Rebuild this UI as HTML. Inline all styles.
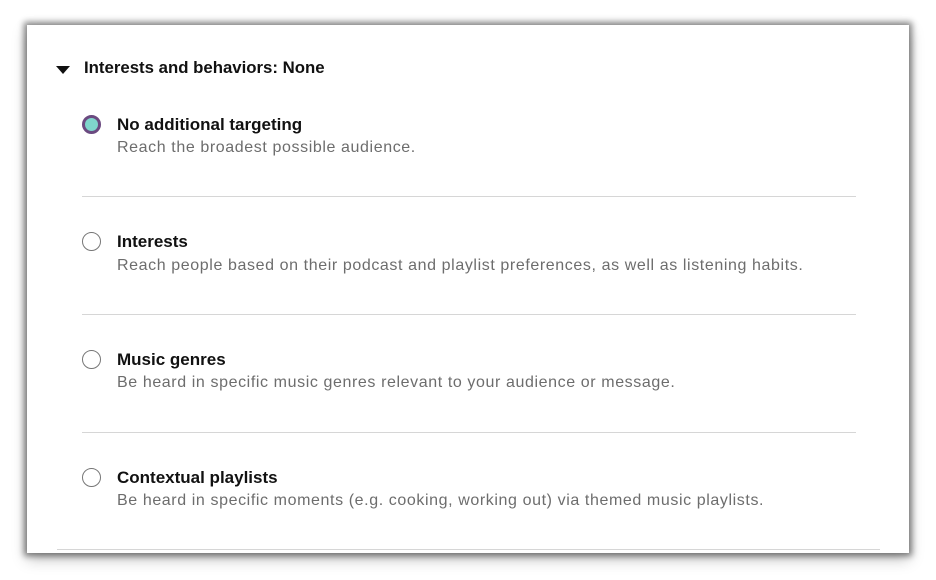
<!DOCTYPE html>
<html><head><meta charset="utf-8"><style>
html,body{margin:0;padding:0;width:936px;height:580px;background:#fff;overflow:hidden;font-family:"Liberation Sans",sans-serif}
.card{position:absolute;left:27px;top:25px;width:882px;height:528px;background:#fff;box-shadow:0 0 6px 3px rgba(0,0,0,.45),0 6px 14px rgba(0,0,0,.25)}
.hdr{position:absolute;left:57px;top:58px;font-weight:bold;font-size:16.8px;color:#111;line-height:20px}
.tri{position:absolute;left:56px;top:66px;width:0;height:0;border-left:7px solid transparent;border-right:7px solid transparent;border-top:8px solid #111}
.hdr span{margin-left:27px}
.radio{position:absolute;left:82px;border:1.5px solid #777;border-radius:50%;box-sizing:border-box;width:19px;height:19px}
.sel{border:3.5px solid #6b4a80;background:#7fd6cc}
.t{position:absolute;left:117px;font-weight:bold;font-size:17px;color:#111;line-height:20px}
.d{position:absolute;left:117px;font-size:16px;letter-spacing:0.6px;color:#6d6d6d;line-height:20px}
.sep{position:absolute;left:82px;width:774px;height:1px;background:#d6d6d6}
</style></head><body>
<div class="card"></div>
<div class="tri"></div>
<div class="hdr"><span>Interests and behaviors: None</span></div>

<div class="radio sel" style="top:115px"></div>
<div class="t" style="top:115px">No additional targeting</div>
<div class="d" style="top:138px">Reach the broadest possible audience.</div>
<div class="sep" style="top:196px"></div>

<div class="radio" style="top:232px"></div>
<div class="t" style="top:232px">Interests</div>
<div class="d" style="top:256px">Reach people based on their podcast and playlist preferences, as well as listening habits.</div>
<div class="sep" style="top:314px"></div>

<div class="radio" style="top:350px"></div>
<div class="t" style="top:350px">Music genres</div>
<div class="d" style="top:373px">Be heard in specific music genres relevant to your audience or message.</div>
<div class="sep" style="top:432px"></div>

<div class="radio" style="top:468px"></div>
<div class="t" style="top:468px">Contextual playlists</div>
<div class="d" style="top:491px">Be heard in specific moments (e.g. cooking, working out) via themed music playlists.</div>
<div class="sep" style="top:549px;left:57px;width:823px"></div>
</body></html>
